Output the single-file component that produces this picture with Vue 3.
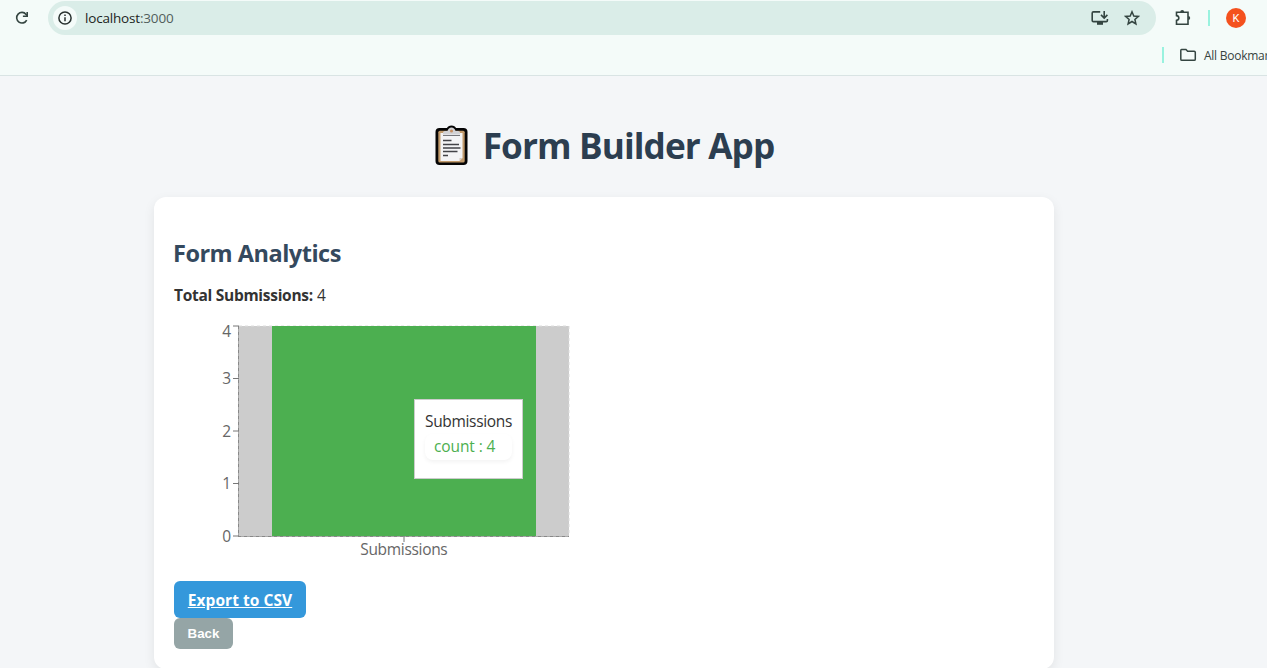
<script setup>
const ticks = [
  { value: 4, y: 5, label: 16 },
  { value: 3, y: 57.5, label: 63 },
  { value: 2, y: 110, label: 116 },
  { value: 1, y: 162.5, label: 168 },
  { value: 0, y: 215, label: 221 },
]
</script>

<template>
  <div class="window">
    <header class="chrome">
      <div class="toolbar">
        <svg class="reload" width="16" height="16" viewBox="0 0 16 16">
          <path d="M12.7 10.1A5.3 5.3 0 1 1 12.1 4.4L13.1 5.6" />
          <path d="M13.2 2V6.3H8.9" />
        </svg>
        <div class="address">
          <span class="site">
            <svg width="16" height="16" viewBox="0 0 16 16">
              <circle cx="8" cy="8" r="6.1" />
              <path d="M8 7.2V11.3M8 4.6V6.1" />
            </svg>
          </span>
          <span class="url">localhost<span class="port">:3000</span></span>
          <svg class="install" width="18" height="16" viewBox="0 0 18 16">
            <path d="M9.2 1.9H2.4Q1.2 1.9 1.2 3.1V10.4Q1.2 11.6 2.4 11.6H15.2Q16.4 11.6 16.4 10.4V9" />
            <path d="M13.2 1V7.8M10 4.9L13.2 8.1L16.4 4.9" />
            <path class="solid" d="M6 12H12V14.8H6Z" />
          </svg>
          <svg class="star" width="16" height="16" viewBox="0 0 16 16">
            <path d="M8 1.8L9.8 6L14.3 6.4L10.9 9.4L11.9 13.9L8 11.5L4.1 13.9L5.1 9.4L1.7 6.4L6.2 6Z" />
          </svg>
        </div>
        <svg class="puzzle" width="18" height="18" viewBox="0 0 18 18">
          <path d="M2.5 3.2H14V15.2H2.5V11.4C5.6 11 5.6 7 2.5 6.6Z" />
          <path class="solid" d="M6.2 3A2 2 0 0 1 10.2 3ZM14.2 7A2 2 0 0 1 14.2 11Z" />
        </svg>
        <span class="divider"></span>
        <span class="avatar">K</span>
      </div>
      <div class="bookmarks">
        <span class="divider"></span>
        <svg width="17" height="14" viewBox="0 0 17 14">
          <path d="M1.5 1.6H6L7.6 3.3H14.2Q15.3 3.3 15.3 4.4V11.2Q15.3 12.3 14.2 12.3H1.9Q.8 12.3 .8 11.2V2.4Q.8 1.6 1.5 1.6Z" />
        </svg>
        <span class="label">All Bookmarks</span>
      </div>
    </header>

    <main class="page">
      <h1>
        <svg class="clipboard" width="36" height="42" viewBox="0 0 36 42">
          <rect x="1.5" y="3" width="32" height="37" rx="4" fill="#050505" />
          <path d="M10 4L13 3Q14 0.5 17.5 0.5Q21 0.5 22 3L25 4V10H10Z" fill="#050505" />
          <rect x="4.3" y="5.7" width="26.4" height="31.8" rx="1.5" fill="#c19a6b" />
          <path d="M6.5 8H28.5V33L25.5 36H6.5Z" fill="#f3f3f5" />
          <path d="M25.5 36V33H28.5Z" fill="#d5c8bd" />
          <path d="M9 9.5V7.5Q9 6 11 6H13.5Q14.5 2.5 17.5 2.5Q20.5 2.5 21.5 6H24Q26 6 26 7.5V9.5Z" fill="#d2d2d5" />
          <circle cx="17.5" cy="6" r="1.5" fill="#c78e60" />
          <path d="M9 10.5H26" stroke="#77777b" />
          <path d="M9 15.5H17.5M9 19.5H25M9 23H26.5M9 26.5H23.5M9 30.5H14" stroke="#424247" stroke-width="1.4" />
        </svg>
        <span>Form Builder App</span>
      </h1>

      <section class="card">
        <h2>Form Analytics</h2>
        <p class="total"><strong>Total Submissions:</strong> <span>4</span></p>
        <div class="chart">
          <svg width="400" height="250" viewBox="0 0 400 250">
            <rect x="65" y="5" width="330" height="210" fill="#ccc" />
            <path class="grid" d="M65 5H395V215" />
            <path class="axis" d="M64.5 5V215.5H395" />
            <path class="axis-dash" d="M64.5 5V215.5H395" />
            <rect x="98" y="5" width="264" height="210" fill="#4caf50" />
            <g v-for="t in ticks" :key="t.value">
              <path class="tick" :d="`M59 ${t.y}H65`" />
              <text x="57" :y="t.label" text-anchor="end">{{ t.value }}</text>
            </g>
            <path class="tick" d="M230 215V221" />
            <text x="230" y="234" text-anchor="middle" textLength="87.5">Submissions</text>
          </svg>
          <div class="tooltip">
            <p>Submissions</p>
            <ul><li>count : 4</li></ul>
          </div>
        </div>
        <div class="actions">
          <a class="export">Export to CSV</a>
          <button class="back">Back</button>
        </div>
      </section>
    </main>
  </div>
</template>

<style>
html, body { margin: 0; overflow: hidden; }
</style>

<style scoped>
* { box-sizing: border-box; }
.window {
  width: 1267px;
  height: 668px;
  overflow: hidden;
  background: #f4f6f8;
  color: #333;
  font-family: "Open Sans", "Noto Sans", sans-serif;
}
.chrome {
  height: 76px;
  background: #f4fbf9;
  border-bottom: 1px solid #d9e4e4;
}
.chrome svg { fill: none; stroke: #344541; stroke-width: 1.6; }
.chrome .solid { fill: #344541; stroke: none; }
.toolbar { display: flex; align-items: center; height: 36px; padding-left: 14px; }
.address {
  display: flex;
  align-items: center;
  width: 1108px;
  height: 34px;
  margin-left: 18px;
  padding: 0 16px 0 5px;
  border-radius: 17px;
  background: #daede8;
}
.site {
  display: grid;
  place-items: center;
  width: 24px;
  height: 24px;
  border-radius: 50%;
  background: #f4fbf9;
}
.chrome .site svg { stroke: #28312f; stroke-width: 1.5; }
.url { flex: 1; margin-left: 8px; font-size: 13.5px; letter-spacing: -0.18px; color: #1c2422; }
.port { color: #52605c; }
.install { margin-right: 15px; }
.chrome .star { stroke-width: 1.5; }
.puzzle { margin-left: 18px; }
.divider { width: 2px; height: 16px; background: #99f2df; }
.toolbar .divider { margin-left: 16px; }
.avatar {
  display: grid;
  place-items: center;
  width: 20px;
  height: 20px;
  margin-left: 16px;
  border-radius: 50%;
  background: #f4511e;
  color: #fff;
  font: 11px Roboto, sans-serif;
}
.bookmarks { display: flex; align-items: center; height: 38px; padding-left: 1162px; }
.bookmarks svg { flex: none; margin-left: 16px; stroke-width: 1.5; }
.bookmarks .divider { flex: none; }
.label { margin-left: 7px; white-space: nowrap; font-size: 12px; letter-spacing: -0.25px; color: #37433f; }

.page { width: 1208px; padding-top: 45px; }
h1 {
  display: flex;
  align-items: center;
  justify-content: center;
  height: 48px;
  margin: 0 0 28px;
  color: #2c3e50;
  font-size: 35.2px;
  letter-spacing: -0.9px;
  white-space: nowrap;
}
.clipboard { margin: 2px 13px 0 0; }
.card {
  width: 900px;
  height: 472px;
  margin: 0 auto;
  padding: 40px 20px 20px;
  border-radius: 12px;
  background: #fff;
  box-shadow: 0 4px 12px rgba(0, 0, 0, 0.08);
}
h2 { margin: 0; color: #34495e; font-size: 23.5px; letter-spacing: -0.5px; line-height: 33px; text-indent: -1px; }
.total { margin: 14px 0 15px; font-size: 15.5px; line-height: 22px; }
.total strong { letter-spacing: -0.28px; }
.chart { position: relative; width: 400px; height: 250px; }
.chart svg { display: block; }
.chart text { font-size: 15.5px; fill: #666; }
.grid { fill: none; stroke: #ddd; stroke-dasharray: 3 3; }
.axis { fill: none; stroke: #aaa; }
.axis-dash { fill: none; stroke: #888; stroke-dasharray: 3 3; }
.tick { stroke: #777; }
.tooltip {
  position: absolute;
  left: 240px;
  top: 78px;
  width: 109px;
  height: 80px;
  padding: 10px;
  border: 1px solid #ccc;
  background: #fff;
  font-size: 15.5px;
  white-space: nowrap;
}
.tooltip p { margin: 0 0 1px; letter-spacing: -0.33px; line-height: 23px; }
.tooltip ul { margin: 0; padding: 0; list-style: none; }
.tooltip li {
  width: 87px;
  height: 26px;
  padding: 0 9px;
  border-radius: 8px;
  box-shadow: 0 2px 4px rgba(0, 0, 0, 0.05);
  color: #4caf50;
  letter-spacing: -0.1px;
  line-height: 25px;
}
.actions { display: flex; flex-direction: column; align-items: flex-start; padding-top: 10px; }
.export {
  width: 132px;
  height: 37px;
  border-radius: 6px;
  background: #3498db;
  color: #fff;
  font-size: 15.5px;
  font-weight: 700;
  letter-spacing: 0.06px;
  line-height: 38px;
  text-align: center;
  text-decoration: underline;
}
.back {
  width: 59px;
  height: 31px;
  padding: 0;
  border: 0;
  border-radius: 6px;
  background: #95a5a6;
  color: #fff;
  font: bold 13.33px "Liberation Sans", Arial, sans-serif;
}
</style>
